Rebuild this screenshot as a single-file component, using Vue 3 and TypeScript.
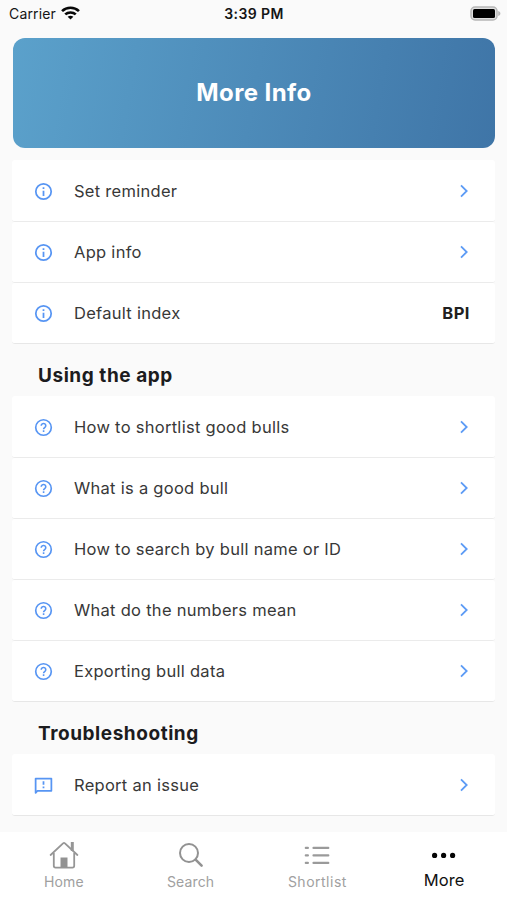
<script setup lang="ts">
type IconName = 'info' | 'help' | 'report'
interface Row { label: string; icon: IconName; value?: string }
interface Section { title?: string; rows: Row[] }

const sections: Section[] = [
  {
    rows: [
      { label: 'Set reminder', icon: 'info' },
      { label: 'App info', icon: 'info' },
      { label: 'Default index', icon: 'info', value: 'BPI' },
    ],
  },
  {
    title: 'Using the app',
    rows: [
      { label: 'How to shortlist good bulls', icon: 'help' },
      { label: 'What is a good bull', icon: 'help' },
      { label: 'How to search by bull name or ID', icon: 'help' },
      { label: 'What do the numbers mean', icon: 'help' },
      { label: 'Exporting bull data', icon: 'help' },
    ],
  },
  { title: 'Troubleshooting', rows: [{ label: 'Report an issue', icon: 'report' }] },
]
</script>

<template>
  <div class="screen">
    <header class="status">
      <div class="carrier">
        <span>Carrier</span>
        <svg class="wifi" width="19" height="14" viewBox="0 0 18 14" preserveAspectRatio="none" fill="none" stroke="#080808" stroke-width="2.5">
          <path d="M1 5.1a11.4 11.4 0 0 1 16 0M4 8.4a7.2 7.2 0 0 1 10 0" />
          <path d="M6.3 10.8a4.2 4.2 0 0 1 5.4 0L9 13.6z" fill="#080808" stroke="none" />
        </svg>
      </div>
      <span class="time">3:39 PM</span>
      <svg class="battery" width="31" height="15" viewBox="0 0 31 15">
        <rect x="1" y="1" width="26" height="13" rx="4" fill="#e0e0e0" stroke="#b7b7b7" stroke-width="1.5" />
        <rect x="3" y="3" width="22" height="9" rx="1.5" fill="#000" />
        <path d="M28.2 5c1.6.6 2.2 1.5 2.2 2.5s-.6 1.9-2.2 2.5z" fill="#b7b7b7" />
      </svg>
    </header>

    <main class="content">
      <h1 class="banner">More Info</h1>
      <section v-for="(section, i) in sections" :key="i" class="section">
        <h2 v-if="section.title" class="heading">{{ section.title }}</h2>
        <ul class="rows">
          <li v-for="row in section.rows" :key="row.label" class="row">
            <svg class="icon" width="21" height="21" viewBox="0 0 24 24" fill="none" stroke="#5795f3" stroke-width="2">
              <template v-if="row.icon === 'info'">
                <circle cx="12" cy="12" r="8.8" />
                <path d="M12 7v2M12 11v6" />
              </template>
              <template v-else-if="row.icon === 'help'">
                <circle cx="12" cy="12" r="8.9" stroke-width="1.9" />
                <path d="M9.4 9.9a2.6 2.5 0 1 1 4.4 1.8c-1 .8-1.700 1.100-1.700 2.300M12.1 15.200v1.800" stroke-width="1.8" />
              </template>
              <template v-else>
                <path d="M3 4h18v14H5.2L3 20.5z" stroke-linejoin="round" />
                <path d="M12 7v4M12 13v2" />
              </template>
            </svg>
            <span class="label">{{ row.label }}</span>
            <strong v-if="row.value" class="value">{{ row.value }}</strong>
            <svg v-else class="chevron" width="8" height="14" viewBox="0 0 8 14" fill="none" stroke="#5c9bf5" stroke-width="1.8">
              <path d="M1 1.3L6.7 7 1 12.7" />
            </svg>
          </li>
        </ul>
      </section>
    </main>

    <nav class="tabs">
      <div class="tab">
        <svg width="30" height="28" viewBox="0 0 30 28" fill="none" stroke="#969696" stroke-width="1.8">
          <path d="M1.6 14L14.3 2.2a1 1 0 0 1 1.4 0L28.400 14" stroke-linecap="round" />
          <path d="M4.8 12v12.8a1.8 1.8 0 0 0 1.8 1.8h16.8a1.800 1.800 0 0 0 1.800-1.800V12" />
          <path d="M23.300 1v9" stroke-width="3" />
          <path d="M11.5 26.5V16.5h7v10z" fill="#929292" stroke="none" />
        </svg>
        <span>Home</span>
      </div>
      <div class="tab">
        <svg width="30" height="28" viewBox="0 0 30 28" fill="none" stroke="#929292">
          <circle cx="13" cy="12" r="9" stroke-width="2" />
          <path d="M19.6 18.6l6 6" stroke-width="2.6" stroke-linecap="round" />
        </svg>
        <span>Search</span>
      </div>
      <div class="tab shortlist">
        <svg width="30" height="28" viewBox="0 0 30 28" stroke="#9a9a9a" stroke-width="2.2" stroke-linecap="round">
          <path d="M3.8 6.9h2.1M11.5 6.9h14.8M3.8 14.4h2.1M11.5 14.4h14.8M3.8 21.900h2.100M11.5 21.900h14.800" />
        </svg>
        <span>Shortlist</span>
      </div>
      <div class="tab active">
        <svg width="30" height="28" viewBox="0 0 30 28" fill="#050505">
          <circle cx="5.600" cy="14.400" r="2.6" />
          <circle cx="14.600" cy="14.400" r="2.6" />
          <circle cx="23.600" cy="14.400" r="2.6" />
        </svg>
        <span>More</span>
      </div>
    </nav>
  </div>
</template>

<style>
body { margin: 0; background: #fafafa; }
</style>

<style scoped>
.screen {
  width: 507px;
  height: 900px;
  display: flex;
  flex-direction: column;
  overflow: hidden;
  background: #fafafa;
  color: #383838;
  font-family: Inter, "Liberation Sans", sans-serif;
}
.status {
  height: 38px;
  flex: none;
  box-sizing: border-box;
  display: grid;
  grid-template-columns: 1fr auto 1fr;
  align-items: start;
  padding: 5px 6px 0 9px;
  color: #151515;
  font-size: 14px;
  line-height: 18px;
}
.carrier { display: flex; gap: 5px; letter-spacing: .15px; }
.wifi { margin-top: 1px; }
.time { margin-right: 2px; font-weight: 600; letter-spacing: .4px; }
.battery { justify-self: end; margin-top: 1px; }
.content { flex: 1; padding: 0 12px; }
.banner {
  height: 110px;
  margin: 0 0 12px 1px;
  display: grid;
  place-items: center;
  border-radius: 12px;
  background: linear-gradient(100deg, #5ba1cb, #3f75a7);
  color: #fff;
  font-size: 24px;
  line-height: 28px;
  font-weight: 700;
  letter-spacing: .4px;
}
.heading {
  height: 52px;
  margin: 0;
  padding-left: 26px;
  line-height: 64px;
  color: #1c1c1e;
  font-size: 19px;
  font-weight: 700;
  letter-spacing: .55px;
}
.rows { margin: 0; padding: 0; list-style: none; }
.row {
  height: 61px;
  box-sizing: border-box;
  display: flex;
  align-items: center;
  padding: 0 26px 0 21px;
  border-bottom: 1px solid #ebebeb;
  border-radius: 3px;
  background: #fff;
}
.section .row:first-child { height: 62px; padding-top: 1px; }
.section .row:last-child { border-bottom-color: #e7e7e7; }
.icon { margin-right: 20px; }
.label { flex: 1; font-size: 16.5px; line-height: 20px; letter-spacing: .28px; }
.value { margin-right: -1px; color: #202020; font-size: 16.5px; line-height: 20px; font-weight: 700; letter-spacing: .5px; }
.chevron { margin-right: 1px; }
.tabs {
  height: 68px;
  flex: none;
  display: grid;
  grid-template-columns: repeat(4, 1fr);
  background: #fff;
}
.tab {
  display: flex;
  flex-direction: column;
  align-items: center;
  padding: 9px 0 0 1px;
  color: #a0a0a0;
  font-size: 14px;
  line-height: 25px;
  letter-spacing: .15px;
}
.shortlist { letter-spacing: .5px; }
.active { color: #111; font-size: 16.5px; line-height: 23px; letter-spacing: .1px; }
</style>
